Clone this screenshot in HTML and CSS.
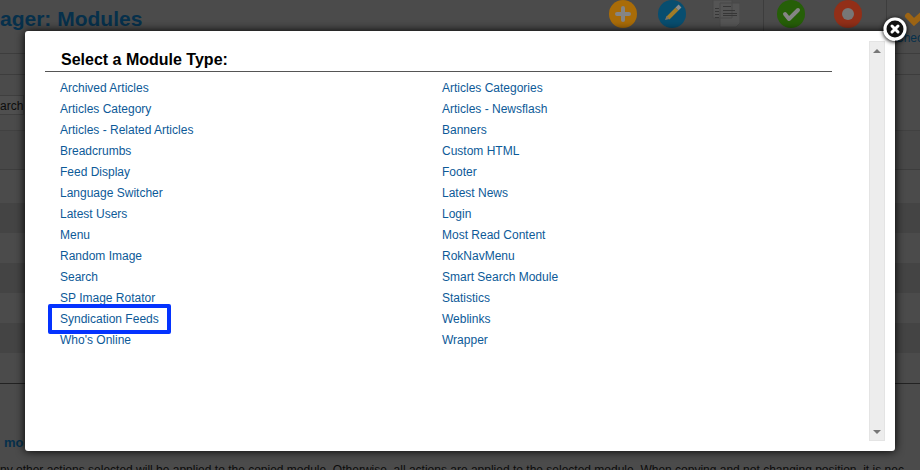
FILE: index.html
```
<!DOCTYPE html>
<html lang="en">
<head>
<meta charset="utf-8">
<title>Module Manager: Modules</title>
<link rel="stylesheet" href="styles.css">
</head>
<body>
<div class="page">
  <header class="top">
    <h1 class="title">ager: Modules</h1>
    <div class="tools">
      <div class="group edit">
        <svg class="tool" viewBox="0 0 28 28" aria-hidden="true"><circle class="orange" cx="14" cy="14" r="14"/><path class="mark" d="M14 8v12M8 14h12"/></svg>
        <svg class="tool" viewBox="0 0 28 28" aria-hidden="true"><circle class="blue" cx="14" cy="14" r="14"/><path class="pencil" d="M10 18l9-9"/><path class="eraser" d="M19 9l3-3"/><path class="tip" d="M7 20l1.500-4 3 3z"/></svg>
        <svg class="tool copy" viewBox="0 0 28 28" aria-hidden="true"><path class="sheet" d="M1 0h19v18H1zM8 3h20v20l-4 4H8z"/><path class="lines" d="M3 8.500h4M3 11.500h4M3 14.500h4M3 17.500h4M11 6.500h8M11 10.500h12M11 13.500h14M11 15.500h14"/></svg>
      </div>
      <div class="group publish">
        <svg class="tool" viewBox="0 0 28 28" aria-hidden="true"><circle class="green" cx="14" cy="14" r="14"/><path class="mark" d="M8 14l4 5 9-9"/></svg>
        <svg class="tool" viewBox="0 0 28 28" aria-hidden="true"><circle class="red" cx="14" cy="14" r="14"/><circle class="hole" cx="14" cy="14" r="6"/></svg>
      </div>
      <div class="group checkin"><svg class="tick" viewBox="0 0 24 16" aria-hidden="true"><path d="M5 6l6 6 10-9"/></svg><a href="#">Chec</a></div>
    </div>
  </header>
  <div class="strip"></div>
  <div class="filters"><button class="search" type="button">arch</button></div>
  <div class="columns"></div>
  <div class="rows"><div></div><div></div><div></div><div></div><div></div><div></div><div></div></div>
  <section class="batch">
    <h2>mo</h2>
    <p>ny other actions selected will be applied to the copied module. Otherwise, all actions are applied to the selected module. When copying and not changing position, it is nec</p>
  </section>
</div>

<div class="modal" role="dialog" aria-labelledby="heading">
  <main class="content">
    <h2 id="heading">Select a Module Type:</h2>
    <ul class="types">
      <li><a href="#">Archived Articles</a></li><li><a href="#">Articles Categories</a></li>
      <li><a href="#">Articles Category</a></li><li><a href="#">Articles - Newsflash</a></li>
      <li><a href="#">Articles - Related Articles</a></li><li><a href="#">Banners</a></li>
      <li><a href="#">Breadcrumbs</a></li><li><a href="#">Custom HTML</a></li>
      <li><a href="#">Feed Display</a></li><li><a href="#">Footer</a></li>
      <li><a href="#">Language Switcher</a></li><li><a href="#">Latest News</a></li>
      <li><a href="#">Latest Users</a></li><li><a href="#">Login</a></li>
      <li><a href="#">Menu</a></li><li><a href="#">Most Read Content</a></li>
      <li><a href="#">Random Image</a></li><li><a href="#">RokNavMenu</a></li>
      <li><a href="#">Search</a></li><li><a href="#">Smart Search Module</a></li>
      <li><a href="#">SP Image Rotator</a></li><li><a href="#">Statistics</a></li>
      <li><a class="picked" href="#">Syndication Feeds</a></li><li><a href="#">Weblinks</a></li>
      <li><a href="#">Who's Online</a></li><li><a href="#">Wrapper</a></li>
    </ul>
  </main>
  <div class="scrollbar">
    <button type="button" aria-label="Scroll up"><svg viewBox="0 0 8 4"><path d="M0 4l4-4 4 4z"/></svg></button>
    <button type="button" aria-label="Scroll down"><svg viewBox="0 0 8 4"><path d="M0 0h8L4 4z"/></svg></button>
  </div>
  <button class="close" type="button" aria-label="Close"><svg viewBox="0 0 24 24"><circle cx="12" cy="12" r="10"/><path d="M9 9l6 6M15 9l-6 6"/></svg></button>
</div>
</body>
</html>
```
FILE: styles.css
```
* { box-sizing: border-box; }

body {
  margin: 0;
  background: #4b4b4b;
  font: 12px/21px "Liberation Sans", Arial, sans-serif;
}

h1, h2, p, ul { margin: 0; padding: 0; }
a { color: #0d5a98; text-decoration: none; }
button { padding: 0; border: 0; font: inherit; }

/* dimmed page behind the dialog */
.page { height: 100vh; overflow: hidden; }

.top {
  display: flex;
  justify-content: space-between;
  height: 54px;
  border-bottom: 1px solid #3d3d3d;
}

.title {
  padding-top: 6px;
  color: #06304b;
  font-size: 21px;
  line-height: 26px;
}

.tools { display: flex; }
.group { display: flex; height: 32px; }
.group + .group { border-left: 1px solid #3d3d3d; }
.tool { width: 28px; height: 28px; }
.edit { gap: 21px; padding-right: 23px; }
.edit .copy { margin-left: 5px; }
.publish { gap: 29px; padding: 0 24px 0 13px; }

.orange { fill: #a96c08; }
.blue { fill: #084e70; }
.green { fill: #265f08; }
.red { fill: #922f18; }
.hole { fill: #777; }
.mark { fill: none; stroke: #858585; stroke-width: 4; stroke-linecap: round; stroke-linejoin: round; }
.pencil { stroke: #a07c28; stroke-width: 4; }
.eraser { stroke: #8b8b8b; stroke-width: 4; }
.tip { fill: #7d7464; }
.sheet { fill: #555; stroke: #484848; }
.lines { stroke: #363636; }

.group.checkin { display: block; width: 34px; height: 50px; }
.checkin a { display: block; padding-left: 8px; color: #06304b; line-height: 14px; }
.tick { display: block; width: 24px; height: 16px; margin: 10px 0 5px 16px; }
.tick path { fill: none; stroke: #9c6414; stroke-width: 6; stroke-linecap: round; }

.strip { height: 21px; border-bottom: 1px solid #3d3d3d; }
.filters { height: 56px; padding-top: 20px; border-bottom: 1px solid #414141; }
.search {
  display: block;
  width: 24px;
  height: 20px;
  border: 1px solid #3f3f3f;
  border-left: 0;
  background: #4f4f4f;
  color: #0c0c0c;
  text-align: left;
}
.columns { height: 39px; border-bottom: 1px solid #3d3d3d; background: #484848; }
.rows { padding-top: 3px; border-bottom: 1px solid #222; }
.rows div { height: 30px; }
.rows div:nth-child(even) { background: #444; }

.batch h2 { padding: 50px 0 0 4px; color: #06304b; font-size: 13px; line-height: 18px; }
.batch p { padding-top: 8px; color: #0c0c0c; line-height: 20px; white-space: nowrap; }

/* dialog */
.modal {
  position: absolute;
  inset: 31px 25px 19px;
  display: flex;
  gap: 37px;
  padding: 10px 10px 10px 20px;
  border-radius: 3px;
  background: #fff;
  box-shadow: 0 0 10px #000;
}

.content { flex: 1; padding-top: 8px; }

.content h2 {
  padding: 0 16px;
  border-bottom: 1px solid #555;
  color: #000;
  font-size: 16px;
  line-height: 22px;
}

.types {
  display: grid;
  grid-template-columns: 1fr 1fr;
  padding: 6px 8px 0 15px;
  list-style: none;
}

.picked { position: relative; }
.picked::after {
  content: "";
  position: absolute;
  inset: -8px -12px;
  border: 4px solid #0433ff;
  border-radius: 2px;
}

.scrollbar {
  display: flex;
  flex-direction: column;
  justify-content: space-between;
  width: 16px;
  border: 1px solid #e4e4e4;
  background: #ededed;
}
.scrollbar button { display: grid; place-items: center; height: 17px; background: transparent; }
.scrollbar svg { width: 8px; height: 4px; fill: #777; }

.close {
  position: absolute;
  top: -14px;
  right: -12px;
  width: 24px;
  height: 24px;
  border-radius: 50%;
  background: transparent;
  box-shadow: 0 1px 4px #000;
}
.close svg { display: block; }
.close circle { fill: #111; stroke: #fff; stroke-width: 3; }
.close path { stroke: #fff; stroke-width: 3; stroke-linecap: round; }
```
